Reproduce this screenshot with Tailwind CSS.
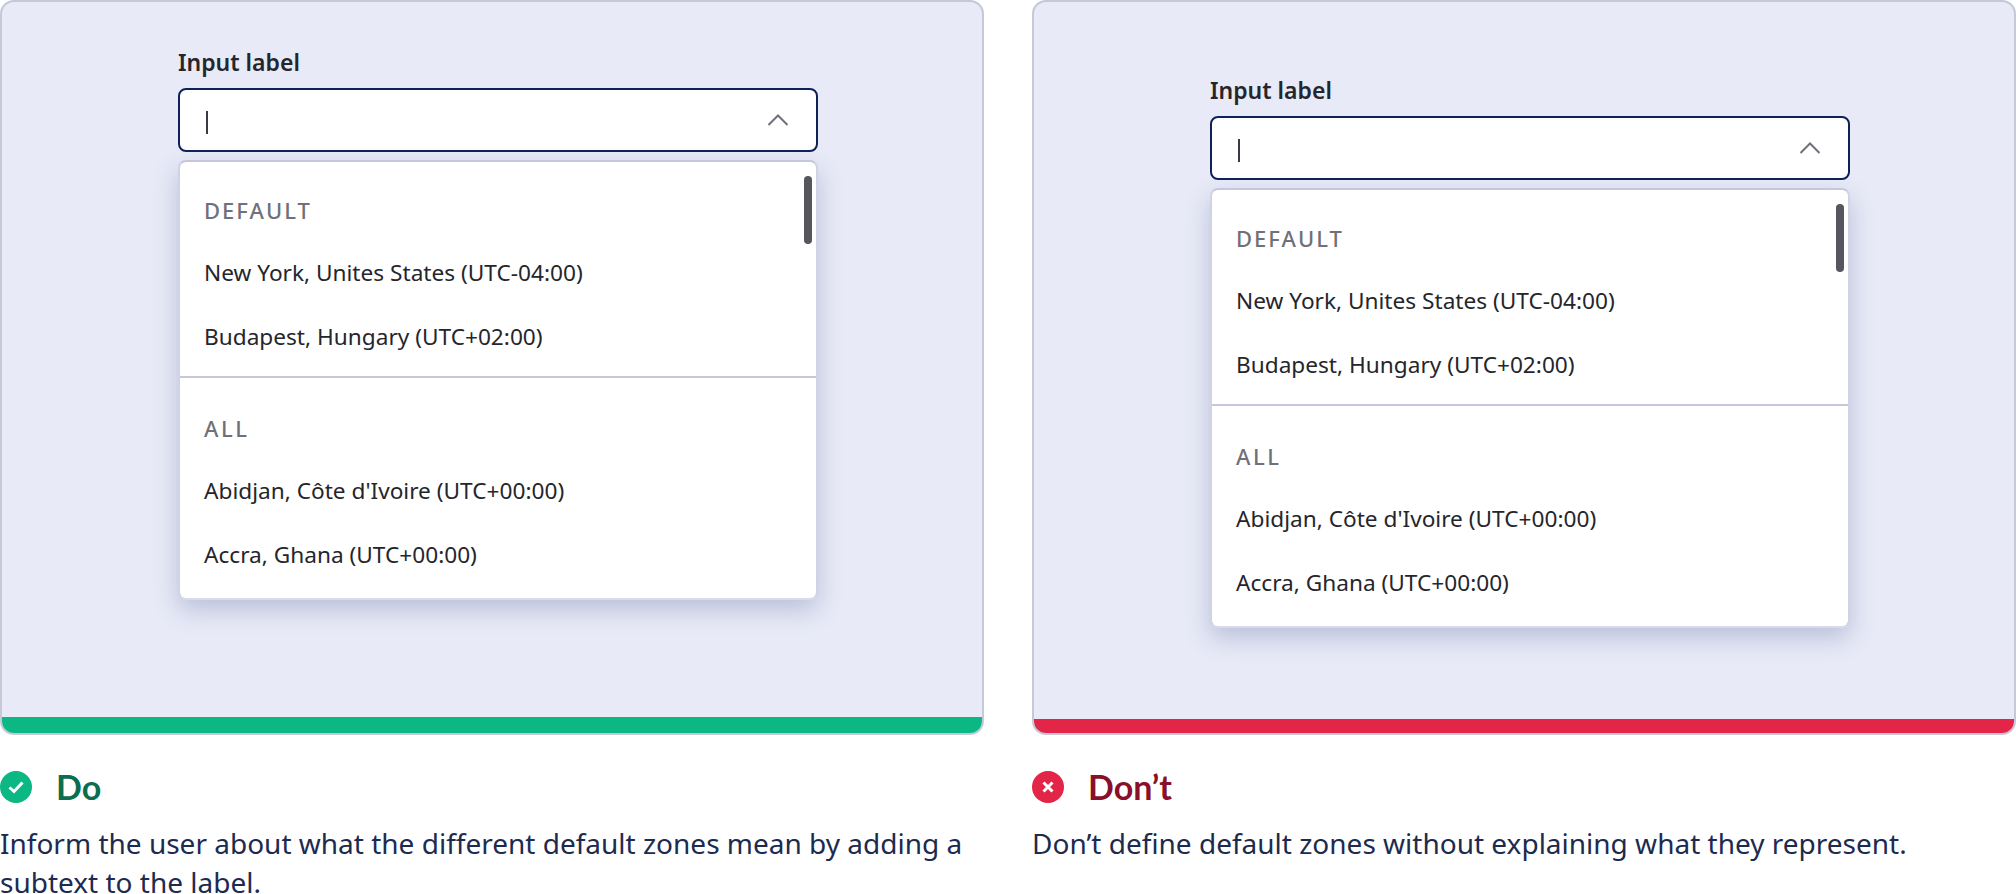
<!DOCTYPE html>
<html lang="en">
<head>
  <meta charset="UTF-8">
  <title>Default zones</title>
  <script src="https://cdn.jsdelivr.net/npm/@tailwindcss/browser@4"></script>
</head>
<body class="bg-white overflow-hidden h-[894px] font-['Noto_Sans',sans-serif]">
  <div class="grid grid-cols-[984px_984px] gap-x-[48px]">

    <!-- do -->
    <div>
      <div class="h-[735px] rounded-[14px] border-2 border-[#c5c8d8] bg-[#e8eaf7] flex flex-col overflow-hidden">
        <div class="flex-1 pl-[176px] pt-[46px]">
          <div class="w-[640px]">
            <p class="text-[23px] leading-[28px] font-semibold text-[#25262c]">Input label</p>
            <div class="mt-[12px] h-[64px] rounded-[8px] border-2 border-[#0f2159] bg-white flex items-center justify-between pl-[26px] pr-[27px]">
              <span class="mt-[5px] w-[2px] h-[23px] bg-[#3a3b42]"></span>
              <svg width="22" height="12" viewBox="0 0 22 12" fill="none"><path d="M1.5 11 L11 1.5 L20.5 11" stroke="#6f7079" stroke-width="2"/></svg>
            </div>
            <div class="relative mt-[8px] h-[440px] rounded-[8px] border-2 border-t-[#c5c8dc] border-x-[#d0d3e4] border-b-[#d8daea] bg-white shadow-[0_10px_24px_rgba(70,85,140,0.28)] text-[22.65px] text-[#25262c]">
              <span class="absolute right-[4px] top-[14px] w-[8px] h-[68px] rounded-full bg-[#55565e]"></span>
              <div class="h-[78px] pt-[29px] pl-[24px] text-[#6f7079] text-[22px] leading-[38px] font-medium tracking-[2px]">DEFAULT</div>
              <div class="h-[64px] pl-[24px] pt-[2px] flex items-center">New York, Unites States (UTC-04:00)</div>
              <div class="h-[64px] pl-[24px] pt-[2px] flex items-center">Budapest, Hungary (UTC+02:00)</div>
              <div class="mt-[8px] h-[2px] bg-[#c5c8dc]"></div>
              <div class="h-[80px] pt-[31px] pl-[24px] text-[#6f7079] text-[22px] leading-[38px] font-medium tracking-[2.5px]">ALL</div>
              <div class="h-[64px] pl-[24px] pt-[2px] flex items-center">Abidjan, Côte d'Ivoire (UTC+00:00)</div>
              <div class="h-[64px] pl-[24px] pt-[2px] flex items-center">Accra, Ghana (UTC+00:00)</div>
            </div>
          </div>
        </div>
        <div class="h-[16px] bg-[#0bb783]"></div>
      </div>
      <div class="mt-[36px] flex items-center gap-[24px]">
        <svg width="32" height="32" viewBox="0 0 32 32"><circle cx="16" cy="16" r="16" fill="#0bb783"/><path d="M9.5 16.5 L14 20.5 L22.5 11.5" fill="none" stroke="#fff" stroke-width="3"/></svg>
        <span class="font-['Lato',sans-serif] text-[34px] leading-[32px] font-bold text-[#0b6e4f]">Do</span>
      </div>
      <p class="mt-[21px] text-[28px] leading-[38.6px] text-[#1c2b4f]">Inform the user about what the different default zones mean by adding a subtext to the label.</p>
    </div>

    <!-- don't -->
    <div>
      <div class="h-[735px] rounded-[14px] border-2 border-[#c5c8d8] bg-[#e8eaf7] flex flex-col overflow-hidden">
        <div class="flex-1 pl-[176px] pt-[74px]">
          <div class="w-[640px]">
            <p class="text-[23px] leading-[28px] font-semibold text-[#25262c]">Input label</p>
            <div class="mt-[12px] h-[64px] rounded-[8px] border-2 border-[#0f2159] bg-white flex items-center justify-between pl-[26px] pr-[27px]">
              <span class="mt-[5px] w-[2px] h-[23px] bg-[#3a3b42]"></span>
              <svg width="22" height="12" viewBox="0 0 22 12" fill="none"><path d="M1.5 11 L11 1.5 L20.5 11" stroke="#6f7079" stroke-width="2"/></svg>
            </div>
            <div class="relative mt-[8px] h-[440px] rounded-[8px] border-2 border-t-[#c5c8dc] border-x-[#d0d3e4] border-b-[#d8daea] bg-white shadow-[0_10px_24px_rgba(70,85,140,0.28)] text-[22.65px] text-[#25262c]">
              <span class="absolute right-[4px] top-[14px] w-[8px] h-[68px] rounded-full bg-[#55565e]"></span>
              <div class="h-[78px] pt-[29px] pl-[24px] text-[#6f7079] text-[22px] leading-[38px] font-medium tracking-[2px]">DEFAULT</div>
              <div class="h-[64px] pl-[24px] pt-[2px] flex items-center">New York, Unites States (UTC-04:00)</div>
              <div class="h-[64px] pl-[24px] pt-[2px] flex items-center">Budapest, Hungary (UTC+02:00)</div>
              <div class="mt-[8px] h-[2px] bg-[#c5c8dc]"></div>
              <div class="h-[80px] pt-[31px] pl-[24px] text-[#6f7079] text-[22px] leading-[38px] font-medium tracking-[2.5px]">ALL</div>
              <div class="h-[64px] pl-[24px] pt-[2px] flex items-center">Abidjan, Côte d'Ivoire (UTC+00:00)</div>
              <div class="h-[64px] pl-[24px] pt-[2px] flex items-center">Accra, Ghana (UTC+00:00)</div>
            </div>
          </div>
        </div>
        <div class="h-[14px] bg-[#e32548]"></div>
      </div>
      <div class="mt-[36px] flex items-center gap-[24px]">
        <svg width="32" height="32" viewBox="0 0 32 32"><circle cx="16" cy="16" r="16" fill="#e32548"/><path d="M11.5 11.5 L20.5 20.5 M20.5 11.5 L11.5 20.5" fill="none" stroke="#fff" stroke-width="3"/></svg>
        <span class="font-['Lato',sans-serif] text-[34px] leading-[32px] font-bold text-[#8a0f2a]">Don’t</span>
      </div>
      <p class="mt-[21px] text-[28px] leading-[38.6px] text-[#1c2b4f]">Don’t define default zones without explaining what they represent.</p>
    </div>

  </div>
</body>
</html>
